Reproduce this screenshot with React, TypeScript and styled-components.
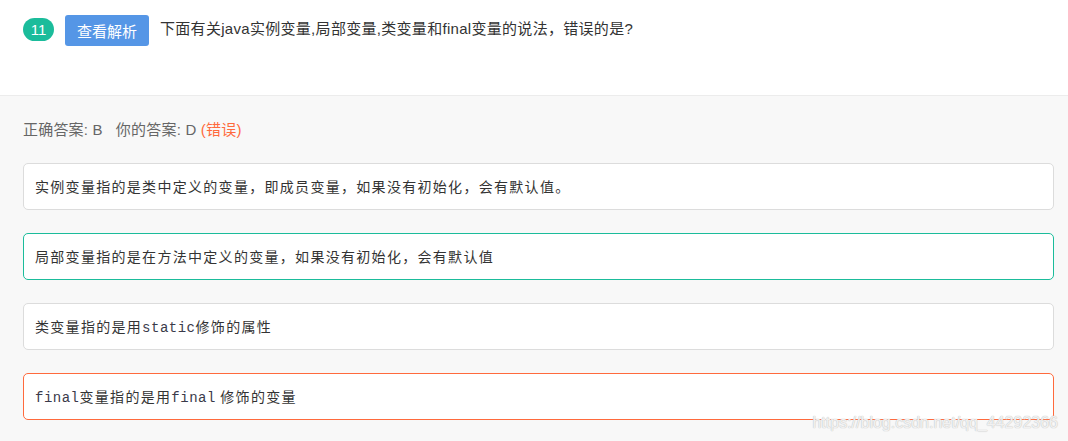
import React from "react";
import styled, { createGlobalStyle } from "styled-components";

const Global = createGlobalStyle`
  html, body { margin: 0; padding: 0; background: #f8f8f8; }
  body { font-family: "Liberation Sans", Arial, "Noto Sans CJK SC", sans-serif; }
`;

const Page = styled.div`
  position: relative;
  width: 1068px;
  height: 441px;
  background: #f8f8f8;
  overflow: hidden;
`;

const Header = styled.div`
  display: flex;
  align-items: flex-start;
  height: 96px;
  box-sizing: border-box;
  padding: 15px 23px 0;
  background: #fff;
  border-bottom: 1px solid #ececec;
`;

const Badge = styled.span`
  display: inline-flex;
  align-items: center;
  justify-content: center;
  width: 31px;
  height: 23px;
  margin-top: 3px;
  border-radius: 12px;
  background: #1bbc9b;
  color: #fff;
  font-size: 15px;
  font-family: "Liberation Sans", Arial, sans-serif;
`;

const ViewButton = styled.button`
  margin-left: 11px;
  width: 84px;
  height: 31px;
  border: none;
  border-radius: 3px;
  background: #5596e6;
  color: #fff;
  font-size: 15px;
  font-family: "Noto Sans CJK SC", sans-serif;
  padding: 0;
  cursor: pointer;
`;

const Question = styled.div`
  margin-left: 11px;
  line-height: 28px;
  font-size: 15px;
  letter-spacing: 0.3px;
  color: #333;
  font-family: "Liberation Sans", Arial, "Noto Sans CJK SC", sans-serif;
`;

const Body = styled.div`
  padding: 24px 14px 0 23px;
`;

const AnswerLine = styled.div`
  font-size: 15px;
  line-height: 20px;
  letter-spacing: 0.2px;
  color: #666;
  font-family: "Liberation Sans", Arial, "Noto Sans CJK SC", sans-serif;
  margin-bottom: 23px;
`;

const Wrong = styled.span`
  color: #ff6a3d;
`;

const Options = styled.div`
  display: flex;
  flex-direction: column;
  gap: 23px;
`;

const toneColor = {
  plain: "#dcdcdc",
  correct: "#1bbc9b",
  wrong: "#ff6a3d",
};

const Option = styled.div<{ $tone: keyof typeof toneColor }>`
  box-sizing: border-box;
  height: 47px;
  padding: 0 11px;
  background: #fff;
  border-radius: 5px;
  border: 1px solid ${(p) => toneColor[p.$tone]};
  font-family: "Noto Sans CJK SC", "Noto Sans CJK TC", sans-serif;
  font-size: 14px;
  line-height: 45px;
  letter-spacing: 1.3px;
  color: #333;
  white-space: pre;
`;

const Code = styled.code`
  font-family: "Liberation Mono", "Courier New", monospace;
  font-size: 14px;
  letter-spacing: 0.5px;
  color: #3a3a4a;
`;

const Watermark = styled.div`
  position: absolute;
  right: 10px;
  bottom: 9px;
  font-family: "Liberation Sans", Arial, sans-serif;
  font-size: 16px;
  color: rgba(248, 248, 248, 0.9);
  text-shadow: 0 0 1px #bdbdbd, 0 0 1px #cfcfcf;
  pointer-events: none;
`;

export default function App() {
  return (
    <Page>
      <Global />
      <Header>
        <Badge>11</Badge>
        <ViewButton>查看解析</ViewButton>
        <Question>下面有关java实例变量,局部变量,类变量和final变量的说法，错误的是?</Question>
      </Header>
      <Body>
        <AnswerLine>
          正确答案: B&nbsp;&nbsp;&nbsp;你的答案: D <Wrong>(错误)</Wrong>
        </AnswerLine>
        <Options>
          <Option $tone="plain">实例变量指的是类中定义的变量，即成员变量，如果没有初始化，会有默认值。</Option>
          <Option $tone="correct">局部变量指的是在方法中定义的变量，如果没有初始化，会有默认值</Option>
          <Option $tone="plain">
            类变量指的是用<Code>static</Code>修饰的属性
          </Option>
          <Option $tone="wrong">
            <Code>final</Code>变量指的是用<Code>final</Code> 修饰的变量
          </Option>
        </Options>
      </Body>
      <Watermark>https://blog.csdn.net/qq_44292366</Watermark>
    </Page>
  );
}
